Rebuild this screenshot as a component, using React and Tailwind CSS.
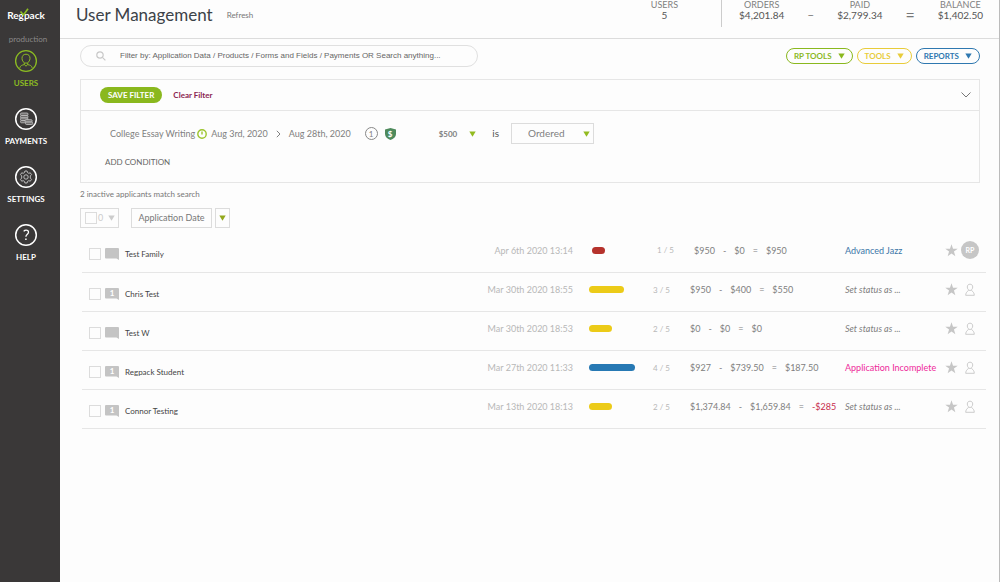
import { useState } from "react";
import { clsx } from "clsx";

const navItems = [
  { label: "USERS", icon: UserIcon, active: true },
  { label: "PAYMENTS", icon: PaymentsIcon },
  { label: "SETTINGS", icon: GearIcon },
  { label: "HELP", icon: HelpIcon },
];

const applicants = [
  {
    name: "Test Family",
    date: "Apr 6th 2020 13:14",
    bar: "w-[13px] bg-[#b5322c]",
    step: "1 / 5",
    amounts: ["$950", "$0", "$950"],
    status: "Advanced Jazz",
    statusColor: "text-[#3b76a8]",
    assigned: "RP",
  },
  {
    name: "Chris Test",
    messages: 1,
    date: "Mar 30th 2020 18:55",
    bar: "w-[35px] bg-[#eccb18]",
    step: "3 / 5",
    amounts: ["$950", "$400", "$550"],
  },
  {
    name: "Test W",
    date: "Mar 30th 2020 18:53",
    bar: "w-[23px] bg-[#eccb18]",
    step: "2 / 5",
    amounts: ["$0", "$0", "$0"],
  },
  {
    name: "Regpack Student",
    messages: 1,
    date: "Mar 27th 2020 11:33",
    bar: "w-[46px] bg-[#2779b4]",
    step: "4 / 5",
    amounts: ["$927", "$739.50", "$187.50"],
    status: "Application Incomplete",
    statusColor: "text-[#ee2a9b]",
  },
  {
    name: "Connor Testing",
    messages: 1,
    date: "Mar 13th 2020 18:13",
    bar: "w-[23px] bg-[#eccb18]",
    step: "2 / 5",
    amounts: ["$1,374.84", "$1,659.84", "-$285"],
  },
];

function UserIcon() {
  return (
    <svg viewBox="0 0 24 24" className="size-6" fill="none" stroke="currentColor">
      <circle cx="12" cy="12" r="10.4" strokeWidth="1.3" />
      <path d="M12 5.2c-2.6 0-4 1.7-4 4.1 0 2.5 1.6 4.9 4 4.9s4-2.4 4-4.9c0-2.4-1.4-4.1-4-4.1z" />
      <path d="M10.3 14v1.6c-2.3.5-4 .9-4.5 3.3M13.7 14v1.6c2.3.5 4 .9 4.5 3.3M10.3 15.6l1.7 1.6 1.700-1.600" />
    </svg>
  );
}

function PaymentsIcon() {
  return (
    <svg viewBox="0 0 24 24" className="size-6" fill="none" stroke="currentColor">
      <circle cx="12" cy="12" r="10.3" strokeWidth="1.5" />
      <g strokeWidth="0.8" stroke="#c4c4c4" fill="#6f6d6d">
        <rect x="6.500" y="6" width="7.500" height="2.500" rx="1" />
        <rect x="6.500" y="8.500" width="7.500" height="2.500" rx="1" />
        <rect x="6.500" y="11" width="7.500" height="2.500" rx="1" />
        <rect x="6.500" y="13.500" width="6" height="2.300" rx="1" />
        <rect x="11" y="12.700" width="7.200" height="2.400" rx="1" />
        <rect x="11.500" y="15.100" width="7.200" height="2.400" rx="1" />
      </g>
    </svg>
  );
}

function GearIcon() {
  return (
    <svg viewBox="0 0 24 24" className="size-6" fill="none" stroke="currentColor">
      <circle cx="12" cy="12" r="10.3" strokeWidth="1.5" />
      <g strokeWidth="0.9" stroke="#c8c8c8">
        <path
          strokeLinejoin="round"
          d="M10.9 6h2.200l.4 1.600 1.300.700 1.500-.5 1.200 1.900-1.200 1.200v2.200l1.200 1.200-1.200 1.900-1.500-.5-1.300.700-.4 1.600h-2.200l-.4-1.600-1.300-.700-1.500.5-1.200-1.900 1.200-1.200v-2.200L6.500 9.700l1.200-1.900 1.500.5 1.300-.700z"
        />
        <circle cx="12" cy="12" r="2.200" />
      </g>
    </svg>
  );
}

function HelpIcon() {
  return (
    <svg viewBox="0 0 24 24" className="size-6" fill="none" stroke="currentColor">
      <circle cx="12" cy="12" r="10.3" strokeWidth="1.5" />
      <path strokeWidth="1.300" d="M9.700 8.300c.6-.8 1.400-1.200 2.400-1.200 1.400 0 2.400.800 2.400 2.100 0 1.900-2.600 2.100-2.600 4.500" />
      <path strokeWidth="1.5" d="M11.900 15.500v1.600" />
    </svg>
  );
}

function Caret({ className }) {
  return (
    <svg viewBox="0 0 8 7" className={clsx("h-[6px] w-[7px] shrink-0", className)} fill="currentColor">
      <path d="M.3.5h7.400L4 6.700z" />
    </svg>
  );
}

function CommentIcon({ count }) {
  return (
    <span className="relative flex h-3 w-[14px] justify-center text-[8px] leading-[11px] font-bold text-white">
      <svg viewBox="0 0 14 12" className="absolute inset-0 h-3 w-[14px] text-[#c4c4c4]" fill="currentColor">
        <path d="M1 0h12a1 1 0 0 1 1 1v11l-2.500-1.500H1a1 1 0 0 1-1-1V1a1 1 0 0 1 1-1z" />
      </svg>
      <span className="relative">{count}</span>
    </span>
  );
}

function StarIcon() {
  return (
    <svg viewBox="0 0 24 24" className="size-[13px]" fill="currentColor">
      <path d="M12 .5l2.800 8.300h8.700l-7 5.200 2.600 8.500-7.100-5.100-7.100 5.100L7.500 14l-7-5.200h8.700z" />
    </svg>
  );
}

function PersonIcon() {
  return (
    <svg viewBox="0 0 10 13" className="h-[13px] w-[10px]" fill="none" stroke="currentColor" strokeWidth="0.9">
      <path d="M5 1.200C3.200 1.200 2.300 2.300 2.300 4S3.400 7.500 5 7.500 7.700 5.700 7.700 4 6.800 1.200 5 1.200z" />
      <path d="M3.500 7.200L2.200 8.800C1.300 9.300.8 10.500.7 12.300h8.600c-.1-1.800-.6-3-1.500-3.500L6.500 7.200" />
    </svg>
  );
}

function Stat({ label, value }) {
  return (
    <div className="text-center">
      <div className="text-[9px] leading-[9px] text-[#808080]">{label}</div>
      <div className="text-[10px] leading-3 text-[#555]">{value}</div>
    </div>
  );
}

function Sidebar() {
  return (
    <aside className="w-[60px] shrink-0 bg-[#3a3838] pr-2 text-white">
      <div className="relative mt-2 h-[14px] text-center text-[10px] leading-[14px] font-bold">
        Regpack
        <svg viewBox="0 0 10 10" className="absolute top-0 left-[19px] size-[10px]" fill="none" stroke="#8cbc22" strokeWidth="1.700">
          <path d="M1.500 3.500l3 3.500L9 .800" />
        </svg>
      </div>
      <p className="mt-[11px] pl-1 text-center text-[8px] leading-3 text-[#8b8989]">production</p>
      <nav className="mt-1 flex flex-col gap-[17px]">
        {navItems.map(({ label, icon: Icon, active }) => (
          <a
            key={label}
            href="#"
            className={clsx(
              "flex flex-col items-center gap-[3px] text-[8px] leading-[14px] font-bold",
              active ? "text-[#8cbc22]" : "text-white"
            )}
          >
            <Icon />
            {label}
          </a>
        ))}
      </nav>
    </aside>
  );
}

function Header() {
  return (
    <header className="flex h-[39px] justify-between border-b border-[#dcdcdc] pr-4 pl-4">
      <div className="flex h-[30px] items-center gap-[14px]">
        <h1 className="text-[17px] text-[#3c4248]">User Management</h1>
        <a href="#" className="text-[8px] text-[#777]">
          Refresh
        </a>
      </div>
      <div className="flex items-start">
        <div className="h-[27px] border-r border-[#ccc] pr-[43px]">
          <Stat label="USERS" value="5" />
        </div>
        <div className="flex items-start gap-[23px] pl-[17px] text-[#777]">
          <Stat label="ORDERS" value="$4,201.84" />
          <span className="pt-[9px] text-[12px] leading-3">–</span>
          <Stat label="PAID" value="$2,799.34" />
          <span className="pt-[9px] text-[16px] leading-3">=</span>
          <Stat label="BALANCE" value="$1,402.50" />
        </div>
      </div>
    </header>
  );
}

function PillButton({ children, className }) {
  return (
    <button className={clsx("flex h-4 items-center gap-[6px] rounded-full border px-[7px] text-[8px] font-bold", className)}>
      {children}
      <Caret />
    </button>
  );
}

function FilterPanel() {
  return (
    <section className="mt-3 border border-[#e6e6e6]">
      <div className="flex h-[31px] items-center border-b border-[#e6e6e6] pr-2 pl-[19px]">
        <button className="h-4 rounded-full bg-[#8ab81e] px-2 text-[8px] font-bold text-white">SAVE FILTER</button>
        <button className="ml-[11px] text-[8px] font-bold text-[#8b2450]">Clear Filter</button>
        <button aria-label="Collapse" className="ml-auto text-[#777]">
          <svg viewBox="0 0 10 6" className="h-[6px] w-[10px]" fill="none" stroke="currentColor">
            <path d="M.5.5L5 5 9.500.5" />
          </svg>
        </button>
      </div>
      <div className="flex h-[45px] items-center pl-[29px] text-[9px] text-[#808080]">
        <span>College Essay Writing</span>
        <svg viewBox="0 0 10 10" className="mr-1 ml-[2px] size-[10px]" fill="none" stroke="#9cc52e" strokeWidth="1.400">
          <circle cx="5" cy="5" r="4.200" />
          <path d="M5 2.500v3" />
        </svg>
        <span>Aug 3rd, 2020</span>
        <svg viewBox="0 0 5 8" className="mx-2 h-2 w-[5px]" fill="none" stroke="currentColor">
          <path d="M.8.8L4 4 .8 7.200" />
        </svg>
        <span>Aug 28th, 2020</span>
        <span className="ml-[14px] flex size-[13px] items-center justify-center rounded-full border border-[#888] text-[8px]">
          1
        </span>
        <span className="relative ml-[7px] flex h-3 w-[11px] items-center justify-center text-[8px] font-bold text-white">
          <svg viewBox="0 0 11 12" className="absolute inset-0 h-3 w-[11px]">
            <path fill="#4e8a5c" d="M5.500 0L11 1.500V6c0 3-2.500 5-5.500 6C2.500 11 0 9 0 6V1.500z" />
          </svg>
          <span className="relative">$</span>
        </span>
        <button className="ml-[43px] flex items-center gap-3 text-[8px] font-bold">
          $500
          <Caret className="text-[#93bb20]" />
        </button>
        <span className="ml-4 text-[10px] text-[#555]">is</span>
        <div className="relative ml-3">
          <select
            aria-label="Order state"
            className="h-[21px] w-[83px] appearance-none border border-[#dcdcdc] pl-4 text-[10px]"
          >
            <option>Ordered</option>
          </select>
          <Caret className="pointer-events-none absolute top-2 right-1 text-[#93bb20]" />
        </div>
      </div>
      <button className="mb-[14px] ml-6 block text-[8px] leading-3 text-[#666]">ADD CONDITION</button>
    </section>
  );
}

function ApplicantRow({ applicant }) {
  const { name, messages, date, bar, step, amounts, status, statusColor, assigned } = applicant;
  const [ordered, paid, balance] = amounts;

  return (
    <tr className="h-[39px] border-b border-[#e6e6e6] text-[9px] whitespace-nowrap">
      <td className="pt-1 pl-[7px]">
        <div className="flex items-center gap-1">
          <input
            type="checkbox"
            aria-label={`Select ${name}`}
            className="size-3 appearance-none border border-[#dcdcdc] checked:bg-[#8cbc22]"
          />
          <CommentIcon count={messages} />
        </div>
      </td>
      <td className="pt-1 text-[8px] text-[#444]">{name}</td>
      <td className="pb-1 text-right text-[#b8b8b8]">{date}</td>
      <td className={clsx("pb-1", assigned ? "pl-[19px]" : "pl-4")}>
        <div className={clsx("h-[7px] rounded-full", bar)} />
      </td>
      <td className={clsx("pb-1 text-[8px] text-[#b8b8b8]", assigned && "pl-1")}>{step}</td>
      <td className={clsx("pb-1 text-[#808080]", assigned && "pl-1")}>
        <div className="flex gap-2">
          <span>{ordered}</span>
          <span>-</span>
          <span>{paid}</span>
          <span>=</span>
          <span className={clsx(balance.startsWith("-") && "text-[#c72c4c]")}>{balance}</span>
        </div>
      </td>
      <td className="pb-1">
        {status ? (
          <span className={statusColor}>{status}</span>
        ) : (
          <button className="text-[#808080] italic">Set status as ...</button>
        )}
      </td>
      <td className="pb-1 text-[#c6c6c6]">
        <div className="flex items-center">
          <button aria-label={`Star ${name}`}>
            <StarIcon />
          </button>
          {assigned ? (
            <span className="ml-[3px] flex size-[18px] items-center justify-center rounded-full bg-[#c6c6c6] text-[7px] font-bold text-white">
              {assigned}
            </span>
          ) : (
            <button aria-label={`Assign ${name}`} className="ml-[7px]">
              <PersonIcon />
            </button>
          )}
        </div>
      </td>
    </tr>
  );
}

export default function App() {
  const [search, setSearch] = useState("");

  return (
    <div className="flex min-h-screen bg-[#fdfdfd] font-['Lato',sans-serif]">
      <Sidebar />
      <div className="min-w-0 flex-1 border-r border-[#bbb]">
        <Header />
        <main className="pt-[6px] pr-[19px] pl-5">
          <div className="flex items-center justify-between">
            <label className="flex h-[22px] w-[398px] items-center gap-[14px] rounded-full border border-[#e0e0e0] pr-4 pl-[15px]">
              <svg viewBox="0 0 10 10" className="size-[10px] shrink-0" fill="none" stroke="#c8c8c8" strokeWidth="1.200">
                <circle cx="4" cy="4" r="3.200" />
                <path d="M6.400 6.400l3 3" />
              </svg>
              <input
                type="search"
                aria-label="Search"
                value={search}
                onChange={(e) => setSearch(e.target.value)}
                placeholder="Filter by: Application Data / Products / Forms and Fields / Payments OR Search anything..."
                className="min-w-0 flex-1 font-['Liberation_Sans',sans-serif] text-[8px] outline-none placeholder:text-[#666]"
              />
            </label>
            <div className="flex gap-1">
              <PillButton className="border-[#8ab81e] text-[#8ab81e]">RP TOOLS</PillButton>
              <PillButton className="border-[#e8cc3a] text-[#e8cc3a]">TOOLS</PillButton>
              <PillButton className="border-[#2f78b0] text-[#2f78b0]">REPORTS</PillButton>
            </div>
          </div>

          <FilterPanel />

          <p className="mt-[5px] text-[8px] leading-3 text-[#777]">2 inactive applicants match search</p>
          <div className="mt-2 flex h-5 text-[9px] text-[#888]">
            <label className="flex w-[39px] items-center border border-[#dcdcdc] pl-1 text-[#ccc]">
              <input type="checkbox" aria-label="Select all" className="mr-[1px] size-3 appearance-none border border-[#dcdcdc]" />
              0
              <Caret className="ml-[5px]" />
            </label>
            <button className="ml-3 w-[81px] border border-[#dcdcdc] text-[#777]">Application Date</button>
            <button aria-label="Sort direction" className="ml-[3px] flex w-[15px] items-center justify-center border border-[#dcdcdc]">
              <Caret className="text-[#93a81c]" />
            </button>
          </div>
        </main>

        <div className="mt-[5px] mr-[13px] ml-[22px]">
          <table className="w-full table-fixed">
            <colgroup>
              <col className="w-[43px]" />
              <col />
              <col className="w-[120px]" />
              <col className="w-[80px]" />
              <col className="w-[37px]" />
              <col className="w-[155px]" />
              <col className="w-[100px]" />
              <col className="w-[41px]" />
            </colgroup>
            <tbody>
              {applicants.map((applicant) => (
                <ApplicantRow key={applicant.name} applicant={applicant} />
              ))}
            </tbody>
          </table>
        </div>
      </div>
    </div>
  );
}
